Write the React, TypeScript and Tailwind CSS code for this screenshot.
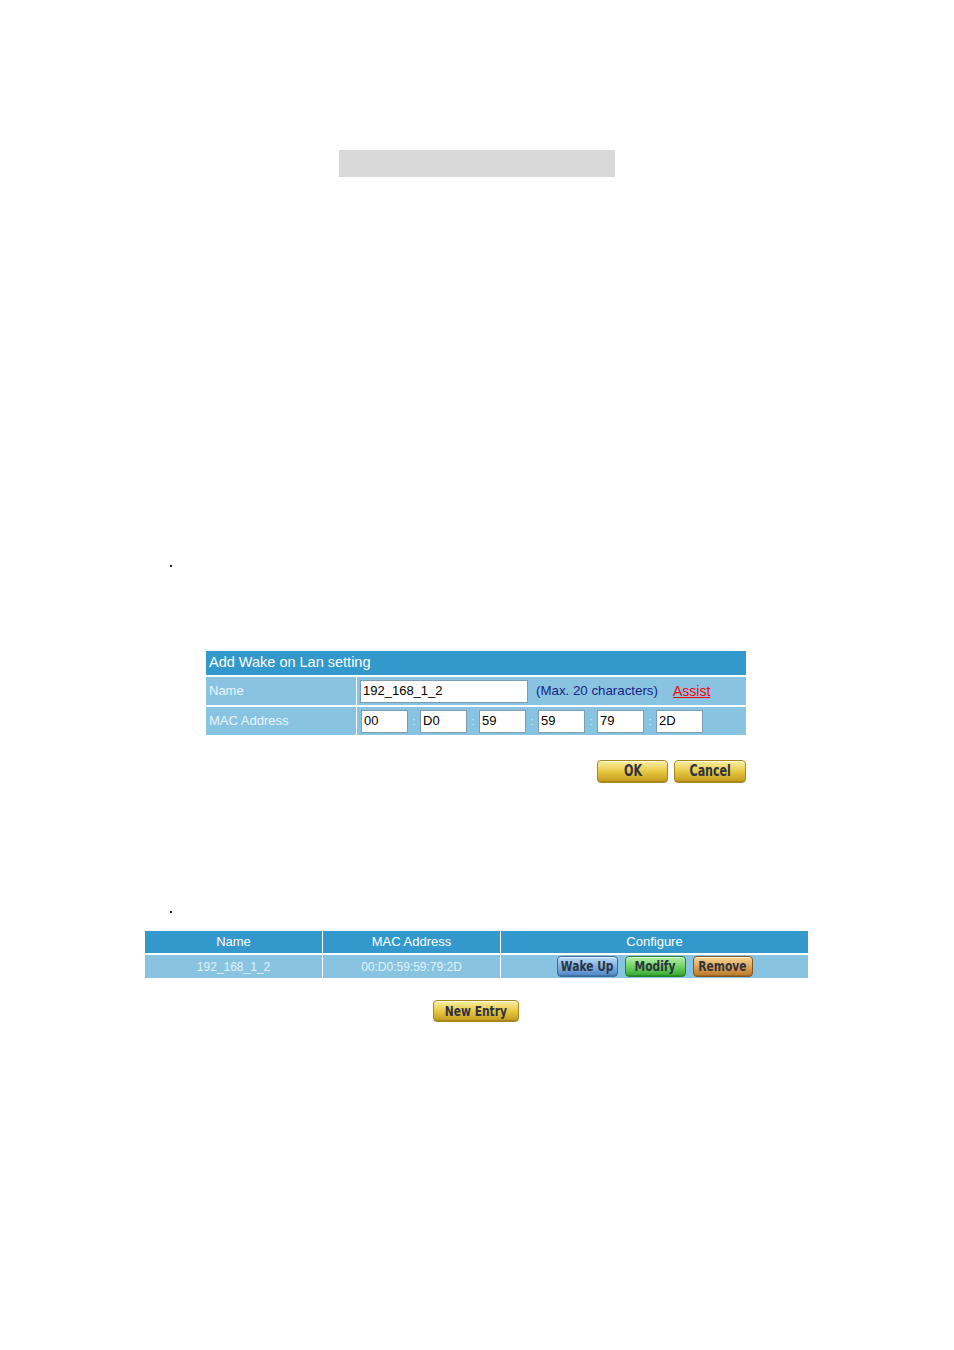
import React from 'react';

const sans = { fontFamily: "'Liberation Sans', Arial, sans-serif" };

type Tone = 'gold' | 'blue' | 'green' | 'orange';

const tones: Record<Tone, string> = {
  gold: 'bg-gradient-to-b from-[#fbf0a0] via-[#e8c840] to-[#c49a1c] border-[#a9861c]',
  blue: 'bg-gradient-to-b from-[#b9daf5] via-[#7fb1e2] to-[#4d86c4] border-[#3a6aa2]',
  green: 'bg-gradient-to-b from-[#b4f0a4] via-[#6fd363] to-[#2fa82f] border-[#23852a]',
  orange: 'bg-gradient-to-b from-[#f6d494] via-[#e0a556] to-[#b87a2c] border-[#86561e]',
};

const ImgButton = ({
  label,
  tone,
  className,
  small,
}: {
  label: string;
  tone: Tone;
  className: string;
  small?: boolean;
}) => (
  <div
    className={`${className} ${tones[tone]} flex items-center justify-center overflow-hidden border rounded-[4px] shadow-[inset_0_1px_0_rgba(255,255,255,0.7),inset_0_-1px_0_rgba(0,0,0,0.15)]`}
  >
    <span
      className={`${small ? 'text-[14.5px]' : 'text-[15px]'} font-bold text-[#2f3340] leading-none whitespace-nowrap inline-block scale-x-[0.82]`}
      style={{ fontFamily: "'DejaVu Sans Condensed', 'Liberation Sans', sans-serif" }}
    >
      {label}
    </span>
  </div>
);

const MacBox = ({ value }: { value: string }) => (
  <div className="w-[47px] h-[23px] bg-white border border-[#7a9db3] flex items-center pl-[2px] text-[13px] text-black">
    {value}
  </div>
);

const App: React.FC = () => {
  const mac = ['00', 'D0', '59', '59', '79', '2D'];

  return (
    <div className="w-[954px] h-[1350px] bg-white" style={sans}>
      <div className="pt-[150px]">
        <div className="ml-[339px] w-[276px] h-[27px] bg-[#d9d9d9]" />
      </div>

      <div className="mt-[388px] ml-[170px] w-[2px] h-[2px] bg-[#222]" />

      {/* Add Wake on Lan setting */}
      <div className="mt-[84px] ml-[206px] w-[540px] flex flex-col gap-[2px]">
        <div className="h-[24px] bg-[#3399cc] flex items-center pl-[3px] text-[14.5px] text-white">
          Add Wake on Lan setting
        </div>
        <div className="flex gap-[1px] h-[28px]">
          <div className="w-[150px] bg-[#88c4e2] flex items-center pl-[3px] text-[13px] text-[#e9f4fa]">Name</div>
          <div className="flex-1 bg-[#88c4e2] flex items-center pl-[3px] pr-2">
            <div className="w-[168px] h-[23px] bg-white border border-[#7a9db3] flex items-center pl-[2px] text-[13px] text-black">
              192_168_1_2
            </div>
            <span className="ml-[8px] text-[13.3px] text-[#1a237e]">(Max. 20 characters)</span>
            <span className="ml-[15px] text-[14px] text-[#ff0000] underline">Assist</span>
          </div>
        </div>
        <div className="flex gap-[1px] h-[28px]">
          <div className="w-[150px] bg-[#88c4e2] flex items-center pl-[3px] text-[13px] text-[#e9f4fa]">MAC Address</div>
          <div className="flex-1 bg-[#88c4e2] flex items-center pl-[4px]">
            {mac.map((m, i) => (
              <React.Fragment key={i}>
                {i > 0 && <span className="w-[12px] text-center text-[11px] text-[#d6ebf5]">:</span>}
                <MacBox value={m} />
              </React.Fragment>
            ))}
          </div>
        </div>
      </div>

      <div className="mt-[25px] ml-[206px] w-[540px] flex justify-end gap-[6px]">
        <ImgButton label="OK" tone="gold" className="w-[71px] h-[23px]" />
        <ImgButton label="Cancel" tone="gold" className="w-[72px] h-[23px]" />
      </div>

      <div className="mt-[128px] ml-[170px] w-[2px] h-[2px] bg-[#222]" />

      {/* Wake on Lan list */}
      <div className="mt-[18px] ml-[145px] w-[663px] flex flex-col gap-[2px]">
        <div className="flex gap-[1px] h-[22px] text-[13px] text-white">
          <div className="w-[177px] bg-[#3399cc] flex items-center justify-center">Name</div>
          <div className="w-[177px] bg-[#3399cc] flex items-center justify-center">MAC Address</div>
          <div className="flex-1 bg-[#3399cc] flex items-center justify-center">Configure</div>
        </div>
        <div className="flex gap-[1px] h-[23px] text-[12px] text-[#e2f1f9]">
          <div className="w-[177px] bg-[#88c4e2] flex items-center justify-center">192_168_1_2</div>
          <div className="w-[177px] bg-[#88c4e2] flex items-center justify-center">00:D0:59:59:79:2D</div>
          <div className="flex-1 bg-[#88c4e2] flex items-center justify-center gap-[7px]">
            <ImgButton label="Wake Up" tone="blue" className="w-[61px] h-[21px]" small />
            <ImgButton label="Modify" tone="green" className="w-[61px] h-[21px]" small />
            <ImgButton label="Remove" tone="orange" className="w-[60px] h-[21px]" small />
          </div>
        </div>
      </div>

      <div className="mt-[22px] ml-[433px]">
        <ImgButton label="New Entry" tone="gold" className="w-[86px] h-[22px]" small />
      </div>
    </div>
  );
};

export default App;
